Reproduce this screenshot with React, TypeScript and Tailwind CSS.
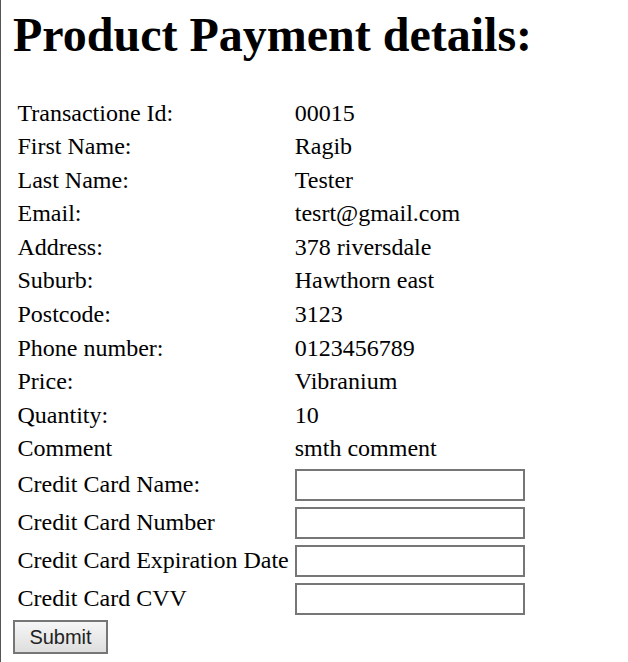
const rows: [string, string][] = [
  ["Transactione Id:", "00015"],
  ["First Name:", "Ragib"],
  ["Last Name:", "Tester"],
  ["Email:", "tesrt@gmail.com"],
  ["Address:", "378 riversdale"],
  ["Suburb:", "Hawthorn east"],
  ["Postcode:", "3123"],
  ["Phone number:", "0123456789"],
  ["Price:", "Vibranium"],
  ["Quantity:", "10"],
  ["Comment", "smth comment"],
];

const cardFields = [
  "Credit Card Name:",
  "Credit Card Number",
  "Credit Card Expiration Date",
  "Credit Card CVV",
];

export default function App() {
  return (
    <div className="min-h-screen border-l border-[#555] bg-white pl-3 pt-[8px] font-['Times_New_Roman','Liberation_Serif',serif] text-[24px] text-black">
      <h1 className="mb-[34px] text-[48px] font-bold leading-[53px]">Product Payment details:</h1>
      <form onSubmit={e => e.preventDefault()}>
        <table className="border-separate border-spacing-[3px]">
          <tbody>
            {rows.map(([label, value]) => (
              <tr key={label}>
                <td className="p-[1.5px] leading-[27.6px]">{label}</td>
                <td className="p-[1.5px] leading-[27.6px]">{value}</td>
              </tr>
            ))}
            {cardFields.map(label => (
              <tr key={label}>
                <td className="p-[1.5px] leading-[27.6px]">{label}</td>
                <td className="p-[1.5px]">
                  <input
                    type="text"
                    className="block h-[32px] w-[230px] border-2 border-[#767676] bg-white px-[3px] font-['Liberation_Sans',Arial,sans-serif] text-[20px] outline-none"
                  />
                </td>
              </tr>
            ))}
          </tbody>
        </table>
        <button
          type="submit"
          className="block h-[34px] w-[95px] border-2 border-[#767676] bg-gradient-to-b from-[#f6f6f6] to-[#dedede] font-['Liberation_Sans',Arial,sans-serif] text-[20px] text-[#222]"
        >
          Submit
        </button>
      </form>
    </div>
  );
}
